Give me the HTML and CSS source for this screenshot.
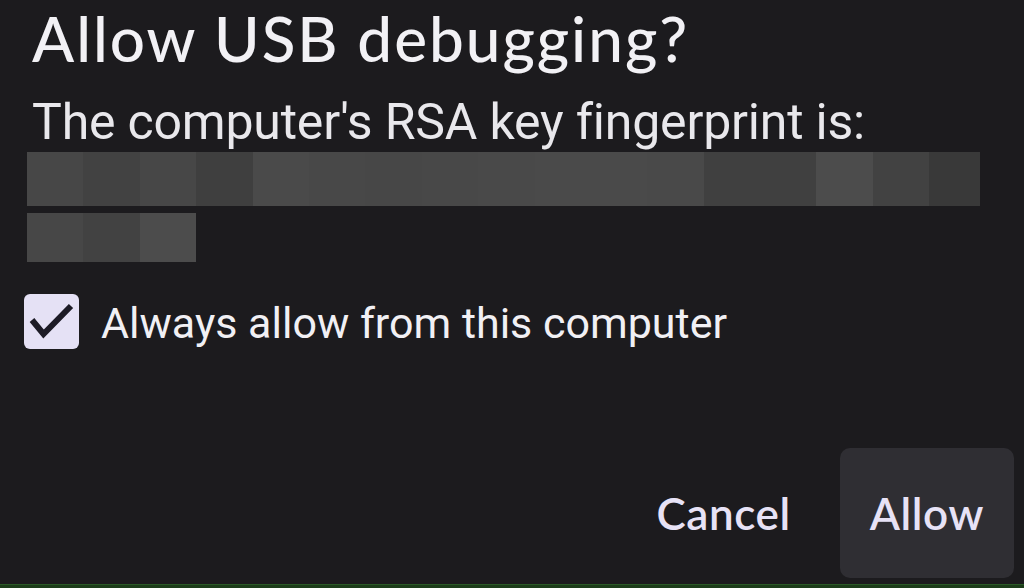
FILE: index.html
```html
<!DOCTYPE html>
<html>
<head>
    <title>Allow USB debugging?</title>
    <link rel="stylesheet" href="styles.css">
</head>
<body>

<div class="dialog">
    <h1 class="title">Allow USB debugging?</h1>
    <p class="message">The computer's RSA key fingerprint is:</p>

    <div class="fingerprint">
        <div class="fp-row">
            <span class="cell c1"></span><span class="cell c2"></span><span class="cell c1"></span>
            <span class="cell c4"></span><span class="cell c5"></span><span class="cell c6"></span>
            <span class="cell c1"></span><span class="cell c6"></span><span class="cell c7"></span>
            <span class="cell c5"></span><span class="cell c5"></span><span class="cell c7"></span>
            <span class="cell c3"></span><span class="cell c3"></span><span class="cell c8"></span>
            <span class="cell c2"></span><span class="cell c9 last"></span>
        </div>
        <div class="fp-row short">
            <span class="cell c1"></span><span class="cell c2"></span><span class="cell c8"></span>
        </div>
    </div>

    <label class="check-row">
        <span class="checkbox">
            <svg viewBox="0 0 55 55" width="55" height="55"><path d="M8 26 L19.5 40 L47 12" fill="none" stroke="#1d1b26" stroke-width="6"/></svg>
        </span>
        <span class="check-label">Always allow from this computer</span>
    </label>

    <div class="actions">
        <button class="btn">Cancel</button>
        <button class="btn btn-filled">Allow</button>
    </div>
</div>
<div class="nav-bar"></div>

</body>
</html>
```

FILE: styles.css
```css
html, body { margin: 0; height: 100%; }
body { background-color: #1c1b1e; font-family: Roboto, "Noto Sans", sans-serif; color: #f1f0f4; overflow: hidden; }

.dialog { height: 584px; box-sizing: border-box; padding: 0 10px 6px 24px; display: flex; flex-direction: column; }

.title { font-family: Lato, Roboto, sans-serif; font-weight: 500; font-size: 62px; line-height: 74px; margin: 1px 0 0 8px; color: #f2f1f5; letter-spacing: 2px; }
.message { font-size: 50px; line-height: 60px; margin: 17px 0 0 8px; color: #e9e8ec; letter-spacing: -0.2px; }

.fingerprint { margin: 0 0 0 3px; display: flex; flex-direction: column; gap: 7px; }
.fp-row { display: flex; height: 54px; }
.fp-row.short { height: 49px; }
.cell { width: 56.4px; height: 100%; }
.cell.last { width: 51px; }
.c1 { background-color: #474747; }
.c2 { background-color: #424242; }
.c3 { background-color: #404040; }
.c4 { background-color: #3f3f3f; }
.c5 { background-color: #4a4a4a; }
.c6 { background-color: #484848; }
.c7 { background-color: #494949; }
.c8 { background-color: #4c4c4c; }
.c9 { background-color: #393939; }

.check-row { display: flex; align-items: center; gap: 22px; margin-top: 30px; }
.checkbox { width: 55px; height: 55px; border-radius: 6px; background-color: #e5e1f5; display: flex; flex-shrink: 0; }
.check-label { font-size: 43px; line-height: 56px; padding-top: 3px; color: #f1f0f4; }

.actions { margin-top: auto; display: flex; justify-content: flex-end; gap: 19px; }
.btn { font-family: Lato, Roboto, sans-serif; font-weight: 600; font-size: 44px; letter-spacing: 0.6px; color: #e7e2f6; background: none; border: none; border-radius: 10px; height: 130px; padding: 0 30px; }
.btn-filled { background-color: #2f2e33; }

.nav-bar { height: 4px; background-color: #1c3d1a; border-top: 1px solid #2b5a27; box-sizing: border-box; }
```
